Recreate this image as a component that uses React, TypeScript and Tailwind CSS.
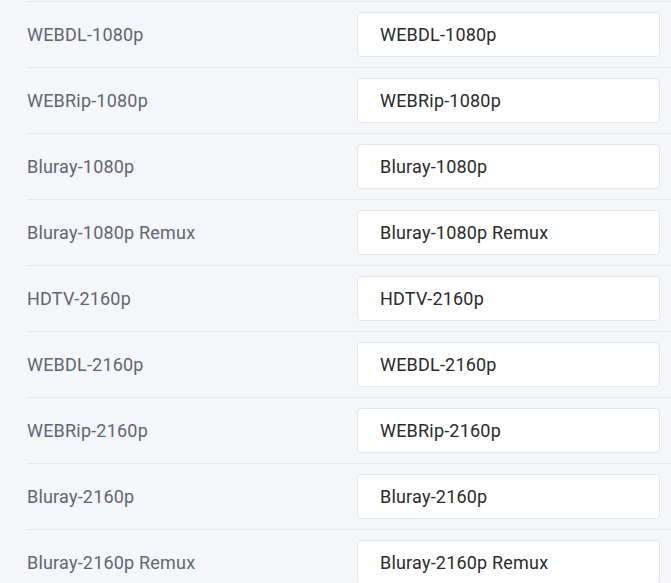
const formats = [
  'WEBDL-1080p',
  'WEBRip-1080p',
  'Bluray-1080p',
  'Bluray-1080p Remux',
  'HDTV-2160p',
  'WEBDL-2160p',
  'WEBRip-2160p',
  'Bluray-2160p',
  'Bluray-2160p Remux',
];

function FormatRow({ name }: { name: string }) {
  return (
    <div className="flex h-[66px] items-center border-t border-[#e6e8ec] tracking-[0.2px]">
      <div className="w-[330px] text-[18px] text-[#5f6673]">{name}</div>
      <input
        type="text"
        defaultValue={name}
        className="h-[45px] w-[303px] rounded-[4px] border border-[#e3e6ea] bg-white px-[22px] text-[18px] text-[#2a2a2a] outline-none"
      />
    </div>
  );
}

export default function App() {
  return (
    <div
      className="min-h-screen overflow-hidden bg-[#f5f6f9] pl-[27px] pt-px"
      style={{ fontFamily: 'Roboto, "Liberation Sans", sans-serif' }}
    >
      {formats.map((f) => (
        <FormatRow key={f} name={f} />
      ))}
    </div>
  );
}
